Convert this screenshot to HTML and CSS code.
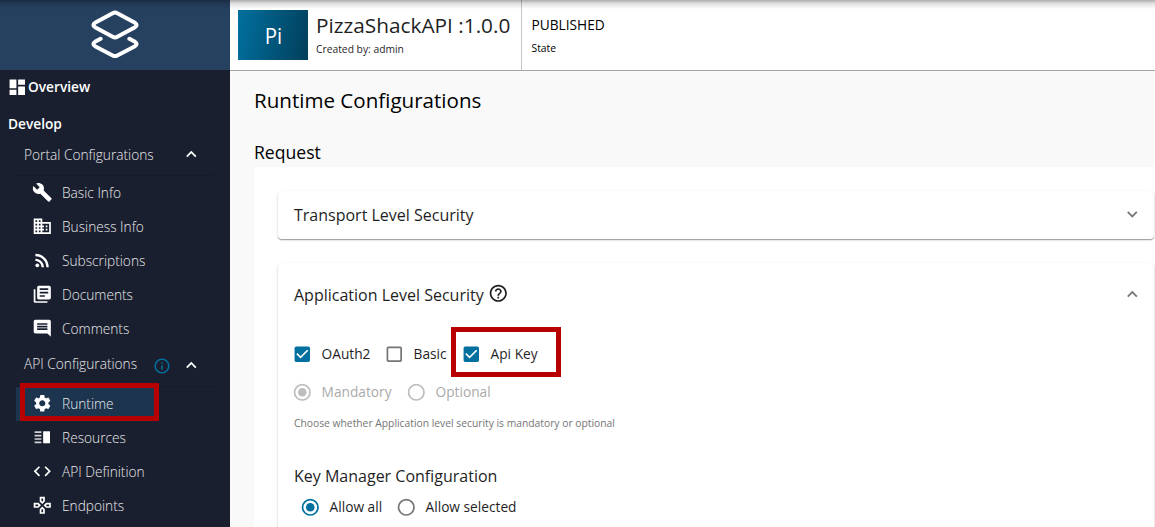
FILE: index.html
```html
<!DOCTYPE html>
<html lang="en">
<head>
<meta charset="utf-8">
<title>PizzaShackAPI - Runtime Configurations</title>
<link rel="stylesheet" href="styles.css">
</head>
<body>
<div class="app">
  <aside class="sidebar">
    <div class="brand">
      <svg class="logo" viewBox="0 0 50 50"><path d="M22.7 3.2Q25 2 27.300 3.200L45 12.800Q48.200 15 45 17.200L27.300 26.800Q25 28 22.700 26.800L5 17.200Q1.800 15 5 12.800ZM10.600 28.800L5 31.800Q1.800 34 5 36.200L22.700 45.400Q25 46.600 27.300 45.400L45 36.200Q48.200 34 45 31.800L39.400 28.800"/></svg>
    </div>
    <nav>
      <a class="overview"><svg class="icon" viewBox="0 0 24 24"><path d="M3 13h8V3H3v10zm0 8h8v-6H3v6zm10 0h8V11h-8v10zm0-18v6h8V3h-8z"/></svg><span>Overview</span></a>
      <div class="group">Develop</div>
      <div class="section"><span>Portal Configurations</span><svg class="chev" viewBox="0 0 24 24"><path d="M12 8l-6 6 1.410 1.410L12 10.830l4.590 4.580L18 14z"/></svg></div>
      <div class="items">
        <a class="item"><svg class="icon" viewBox="0 0 24 24"><path d="M22.700 19l-9.100-9.100c.9-2.300.4-5-1.500-6.900-2-2-5-2.400-7.400-1.300L9 6 6 9 1.600 4.700C.4 7.100.9 10.100 2.900 12.100c1.900 1.900 4.600 2.400 6.900 1.500l9.100 9.100c.4.4 1 .4 1.400 0l2.300-2.300c.5-.4.5-1.100.1-1.400z"/></svg><span>Basic Info</span></a>
        <a class="item"><svg class="icon" viewBox="0 0 24 24"><path d="M12 7V3H2v18h20V7H12zM6 19H4v-2h2v2zm0-4H4v-2h2v2zm0-4H4V9h2v2zm0-4H4V5h2v2zm4 12H8v-2h2v2zm0-4H8v-2h2v2zm0-4H8V9h2v2zm0-4H8V5h2v2zm10 12h-8v-2h2v-2h-2v-2h2v-2h-2V9h8v10zm-2-8h-2v2h2v-2zm0 4h-2v2h2v-2z"/></svg><span>Business Info</span></a>
        <a class="item"><svg class="icon" viewBox="0 0 24 24"><circle cx="6.180" cy="17.820" r="2.180"/><path d="M4 4.440v2.830c7.030 0 12.730 5.700 12.730 12.730h2.830c0-8.590-6.970-15.560-15.560-15.560zm0 5.660v2.830c3.900 0 7.070 3.170 7.070 7.070h2.830c0-5.470-4.430-9.900-9.900-9.900z"/></svg><span>Subscriptions</span></a>
        <a class="item"><svg class="icon" viewBox="0 0 24 24"><path d="M4 6H2v14c0 1.100.9 2 2 2h14v-2H4V6zm16-4H8c-1.100 0-2 .9-2 2v12c0 1.100.9 2 2 2h12c1.100 0 2-.9 2-2V4c0-1.100-.9-2-2-2zm-1 9H9V9h10v2zm-4 4H9v-2h6v2zm4-8H9V5h10v2z"/></svg><span>Documents</span></a>
        <a class="item"><svg class="icon" viewBox="0 0 24 24"><path d="M21.990 4c0-1.100-.89-2-1.990-2H4c-1.100 0-2 .9-2 2v12c0 1.100.9 2 2 2h14l4 4-.010-18zM18 14H6v-2h12v2zm0-3H6V9h12v2zm0-3H6V6h12v2z"/></svg><span>Comments</span></a>
      </div>
      <div class="section api"><span>API Configurations</span><svg class="info" viewBox="0 0 24 24"><path d="M11 7h2v2h-2zm0 4h2v6h-2zm1-9C6.480 2 2 6.480 2 12s4.480 10 10 10 10-4.480 10-10S17.520 2 12 2zm0 18c-4.410 0-8-3.590-8-8s3.590-8 8-8 8 3.590 8 8-3.590 8-8 8z"/></svg><svg class="chev" viewBox="0 0 24 24"><path d="M12 8l-6 6 1.410 1.410L12 10.830l4.590 4.580L18 14z"/></svg></div>
      <div class="items">
        <a class="item active"><svg class="icon" viewBox="0 0 24 24"><path d="M19.140 12.940c.04-.3.060-.61.060-.94 0-.32-.02-.64-.07-.94l2.030-1.580c.18-.14.23-.41.12-.61l-1.920-3.320c-.12-.22-.37-.29-.59-.22l-2.390.96c-.5-.38-1.030-.7-1.620-.94L14.400 2.810c-.04-.24-.24-.41-.48-.41h-3.840c-.24 0-.43.17-.47.41L9.250 5.350c-.59.24-1.130.57-1.620.94L5.240 5.330c-.22-.08-.47 0-.59.22L2.740 8.870c-.12.21-.08.47.12.61l2.030 1.580c-.05.3-.09.63-.09.94s.02.64.07.94l-2.030 1.580c-.18.14-.23.41-.12.61l1.920 3.320c.12.22.37.29.59.22l2.390-.96c.5.38 1.030.7 1.620.94l.36 2.540c.05.24.24.41.48.41h3.840c.24 0 .44-.17.47-.41l.36-2.540c.59-.24 1.130-.56 1.620-.94l2.390.96c.22.08.47 0 .59-.22l1.920-3.320c.12-.22.07-.47-.12-.61l-2.010-1.580zM12 15.600c-1.980 0-3.600-1.620-3.600-3.600s1.620-3.600 3.600-3.600 3.600 1.620 3.600 3.600-1.620 3.600-3.600 3.600z"/></svg><span>Runtime</span><i class="mark mark-nav"></i></a>
        <a class="item"><svg class="icon" viewBox="0 0 24 24"><path d="M13 5h8v14h-8z"/><path opacity=".8" d="M3 5h8v2H3zm0 4h8v2H3zm0 4h8v2H3zm0 4h8v2H3z"/></svg><span>Resources</span></a>
        <a class="item"><svg class="icon" viewBox="0 0 24 24"><path d="M9.400 16.600L4.800 12l4.600-4.600L8 6l-6 6 6 6 1.400-1.400zm5.200 0l4.600-4.600-4.600-4.600L16 6l6 6-6 6-1.400-1.400z"/></svg><span>API Definition</span></a>
        <a class="item"><svg class="icon" viewBox="0 0 24 24"><path d="M13 4v2.670l-1 1-1-1V4h2m7 7v2h-2.670l-1-1 1-1H20M6.670 11l1 1-1 1H4v-2h2.670M12 16.330l1 1V20h-2v-2.670l1-1M15 2H9v5.500l3 3 3-3V2zm7 7h-5.500l-3 3 3 3H22V9zM7.500 9H2v6h5.500l3-3-3-3zm4.500 4.500l-3 3V22h6v-5.500l-3-3z"/></svg><span>Endpoints</span></a>
      </div>
    </nav>
  </aside>
  <div class="main">
    <header class="topbar">
      <div class="thumb"><span>Pi</span></div>
      <div class="title"><div class="name">PizzaShackAPI :1.0.0</div><div class="sub">Created by: admin</div></div>
      <div class="state"><div class="status">PUBLISHED</div><div class="sub">State</div></div>
    </header>
    <main class="content">
      <h1>Runtime Configurations</h1>
      <h2>Request</h2>
      <div class="paper">
        <section class="panel closed">
          <div class="panel-head"><span>Transport Level Security</span><svg class="expand" viewBox="0 0 24 24"><path d="M16.590 8.590L12 13.170 7.410 8.590 6 10l6 6 6-6z"/></svg></div>
        </section>
        <section class="panel open">
          <div class="panel-head"><span>Application Level Security</span><svg class="help" viewBox="0 0 24 24"><path d="M11 18h2v-2h-2v2zm1-16C6.480 2 2 6.480 2 12s4.480 10 10 10 10-4.480 10-10S17.520 2 12 2zm0 18c-4.410 0-8-3.590-8-8s3.590-8 8-8 8 3.590 8 8-3.590 8-8 8zm0-14c-2.210 0-4 1.790-4 4h2c0-1.100.9-2 2-2s2 .9 2 2c0 2-3 1.750-3 5h2c0-2.250 3-2.500 3-5 0-2.210-1.790-4-4-4z"/></svg><svg class="expand" viewBox="0 0 24 24"><path d="M12 8l-6 6 1.410 1.410L12 10.830l4.590 4.580L18 14z"/></svg></div>
          <div class="checks">
            <label class="opt oauth"><svg class="box on" viewBox="0 0 24 24"><path d="M19 3H5c-1.110 0-2 .9-2 2v14c0 1.100.89 2 2 2h14c1.110 0 2-.9 2-2V5c0-1.100-.89-2-2-2zm-9 14l-5-5 1.410-1.410L10 14.170l7.590-7.590L19 8l-9 9z"/></svg><span>OAuth2</span></label>
            <label class="opt basic"><svg class="box" viewBox="0 0 24 24"><path d="M19 5v14H5V5h14m0-2H5c-1.100 0-2 .9-2 2v14c0 1.100.9 2 2 2h14c1.100 0 2-.9 2-2V5c0-1.100-.9-2-2-2z"/></svg><span>Basic</span></label>
            <label class="opt apikey"><svg class="box on" viewBox="0 0 24 24"><path d="M19 3H5c-1.110 0-2 .9-2 2v14c0 1.100.89 2 2 2h14c1.110 0 2-.9 2-2V5c0-1.100-.89-2-2-2zm-9 14l-5-5 1.410-1.410L10 14.170l7.590-7.590L19 8l-9 9z"/></svg><span>Api Key</span><i class="mark mark-key"></i></label>
          </div>
          <div class="radios disabled">
            <label class="opt"><svg class="box" viewBox="0 0 24 24"><circle class="ring" cx="12" cy="12" r="9"/><circle cx="12" cy="12" r="5"/></svg><span class="mandatory">Mandatory</span></label>
            <label class="opt"><svg class="box" viewBox="0 0 24 24"><circle class="ring" cx="12" cy="12" r="9"/></svg><span>Optional</span></label>
          </div>
          <p class="hint">Choose whether Application level security is mandatory or optional</p>
          <h3>Key Manager Configuration</h3>
          <div class="radios managers">
            <label class="opt"><svg class="box on" viewBox="0 0 24 24"><circle class="ring" cx="12" cy="12" r="9"/><circle cx="12" cy="12" r="5"/></svg><span class="all">Allow all</span></label>
            <label class="opt"><svg class="box" viewBox="0 0 24 24"><circle class="ring" cx="12" cy="12" r="9"/></svg><span>Allow selected</span></label>
          </div>
        </section>
      </div>
    </main>
  </div>
  <div class="top-shade"></div>
</div>
</body>
</html>
```
FILE: styles.css
```css
* { box-sizing: border-box; }
body { margin: 0; font-family: "Open Sans", "Noto Sans", sans-serif; color: #1f1f1f; }
svg { display: block; flex: none; fill: currentColor; }
.app { position: relative; display: flex; width: 1155px; height: 527px; overflow: hidden; background: #f9f9f9; }
.top-shade { position: absolute; inset: 0 0 auto; height: 9px; background: linear-gradient(rgba(0,0,0,.32), rgba(0,0,0,.12) 40%, transparent); }

.sidebar { width: 230px; flex: none; background: #1a1f2f; color: #fff; }
.brand { height: 70px; background: #264060; display: flex; justify-content: center; padding-top: 10px; }
.logo { width: 50px; height: 50px; fill: none; stroke: #fff; stroke-width: 4; stroke-linecap: round; stroke-linejoin: round; }
.icon { width: 20.570px; height: 20.570px; }
.overview { display: flex; align-items: center; height: 34px; padding-left: 7.430px; font-size: 13.710px; font-weight: 600; }
.overview span { margin-bottom: 2px; }
.group { height: 31px; padding: 10px 0 0 8px; font-size: 13.710px; line-height: 20px; font-weight: 600; }
.section { display: flex; align-items: center; width: 198px; height: 41px; margin-left: 16px; padding-left: 8px; border-bottom: 1px solid #171b29; font-size: 13.710px; font-weight: 300; color: #e8e9eb; }
.section span { flex: none; width: 157px; margin-bottom: 2px; }
.chev { width: 20.570px; height: 20.570px; color: #fff; margin-top: -1px; }
.api { padding-bottom: 4px; }
.api span { width: 128.500px; }
.info { width: 18px; height: 18px; color: #01709f; margin: 4px 10.500px 0 0; }
.api .chev { margin-top: 2px; }
.item { position: relative; display: flex; align-items: center; gap: 9.430px; width: 138px; height: 34px; margin-left: 16px; padding-left: 16px; font-size: 13.710px; font-weight: 300; color: #e8e9eb; }
.item span { margin-bottom: 2px; }
.item .icon { color: #fff; margin-top: -1px; }
.active { background: #1d344f; }
.mark { position: absolute; border: 5px solid #b70000; }
.mark-nav { left: 4px; top: -4px; width: 139px; height: 38px; }

.main { flex: 1; min-width: 0; }
.topbar { display: flex; height: 71px; background: #fff; border-bottom: 1px solid #a5a5a5; padding-left: 8px; }
.thumb { width: 70px; height: 50px; margin-top: 10px; display: flex; align-items: center; justify-content: center; color: #fff; font-size: 22px; background: linear-gradient(100deg, #01709f, #023f5b); }
.thumb span { transform: scaleX(.93); }
.title { width: 214px; padding: 9px 0 0 8px; border-right: 1px solid #c5c5c5; }
.name { font-size: 20.800px; line-height: 32px; white-space: nowrap; }
.title .sub { margin-top: 1px; }
.sub { font-size: 10.300px; line-height: 14px; }
.state { padding: 15px 0 0 9.500px; color: #000; }
.status { font-size: 13.710px; line-height: 20px; }
.state .sub { margin-top: 6px; }
.content { padding: 15px 0 0 24px; }
h1, h2, h3, p { margin: 0; font-weight: 400; }
h1 { font-size: 20.570px; line-height: 28px; color: #000; }
h2 { font-size: 17.600px; line-height: 24px; margin-top: 26px; color: #000; }
.paper { margin-top: 3px; padding: 24px 1px 0 24px; background: #fff; border-radius: 4px 0 0; height: 380px; }
.panel { background: #fff; border-radius: 4px; box-shadow: 0 1px 1px rgba(0,0,0,.32), 0 1px 3px rgba(0,0,0,.14); padding: 0 11.700px 0 16px; }
.closed { height: 48px; }
.panel-head { display: flex; align-items: center; height: 48px; font-size: 16px; }
.expand { width: 20.570px; height: 20.570px; margin: -2px 0 0 auto; color: #747474; }
.open { margin-top: 24px; height: 300px; }
.open .panel-head { height: 64px; }
.help { width: 20.570px; height: 20.570px; margin: -3px 0 0 4px; }
.checks, .radios { display: flex; align-items: center; }
.opt { position: relative; display: flex; align-items: center; font-size: 13.710px; height: 20px; }
.opt span { white-space: nowrap; margin-bottom: 2px; }
.box { width: 20.570px; height: 20.570px; color: #757575; margin-right: 9px; }
.box.on { color: #01709f; }
.ring { fill: none; stroke: currentColor; stroke-width: 2; }
.checks { margin: 17px 0 0 -2px; }
.oauth { width: 92px; }
.basic { width: 77px; }
.mark-key { left: -10px; top: -17px; width: 110px; height: 50px; }
.disabled { margin: 18px 0 0 -2px; color: #aaa; }
.disabled .box { color: #bdbdbd; }
.mandatory { width: 84.430px; }
.hint { margin-top: 13px; font-size: 10.300px; line-height: 16px; color: #757575; }
h3 { margin-top: 33px; font-size: 16px; line-height: 24px; }
.managers { margin: 9px 0 0 6px; }
.all { width: 66.430px; }
```
